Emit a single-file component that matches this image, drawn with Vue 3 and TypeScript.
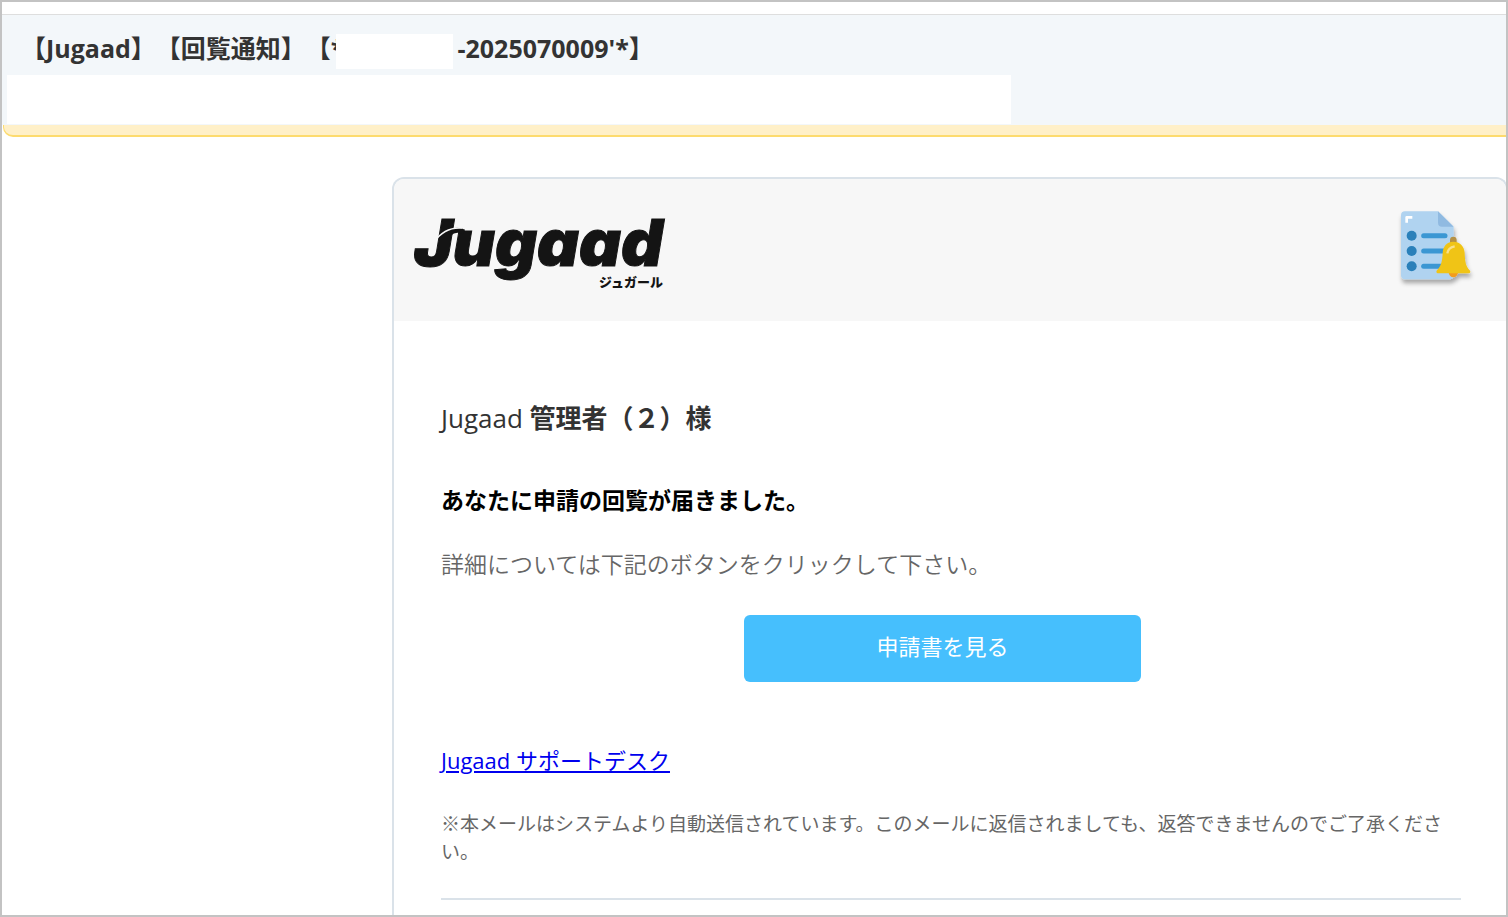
<script setup lang="ts">
const recipient: string = '管理者（２）様'
const bulletRows: number[] = [194, 240, 286]
</script>

<template>
  <div class="frame">
    <header class="subject">
      <h1 class="subject-title">
        <span>【Jugaad】【回覧通知】【*</span>
        <span class="mask"></span>
        <span>-2025070009'*】</span>
      </h1>
      <div class="sender-mask"></div>
    </header>
    <div class="notice-bar"></div>

    <main class="mail-card">
      <div class="brand-bar">
        <div class="brand">
          <span class="brand-name">Jugaad</span>
          <span class="brand-kana">ジュガール</span>
          <svg class="brand-swoosh" viewBox="0 0 80 40" aria-hidden="true">
            <path d="M35 23C39 19 44 18 50 21" fill="none" stroke="#141414" stroke-width="5" />
            <path d="M20 31C27 21 36 16 48 17" fill="none" stroke="#f7f7f7" stroke-width="1.5" />
          </svg>
        </div>
        <svg class="notice-icon" viewBox="30 117 240 240" aria-hidden="true">
          <defs>
            <filter id="icon-shadow" x="-20%" y="-20%" width="150%" height="150%">
              <feDropShadow dx="3" dy="12" stdDeviation="6" flood-color="#000" flood-opacity="0.32" />
            </filter>
          </defs>
          <g filter="url(#icon-shadow)">
            <path d="M54 121H153L200 167V313Q200 325 188 325H54Q42 325 42 313V133Q42 121 54 121Z" fill="#b0d3f0" />
            <path d="M153 121L200 167H165Q153 167 153 155Z" fill="#90bae1" />
            <path d="M59 155V139H76" fill="none" stroke="#fff" stroke-width="8" stroke-linejoin="round" />
            <template v-for="y in bulletRows" :key="y">
              <circle cx="74" :cy="y" r="15" fill="#2980ba" />
              <path :d="`M110 ${y}H174`" stroke="#3b97d3" stroke-width="15" stroke-linecap="round" />
            </template>
            <path d="M185 303A14 16 0 0 0 213 303V300H185Z" fill="#f29c1f" />
            <path d="M189 218V207A10 10 0 0 1 209 207V218Z" fill="#b59144" />
            <path d="M199 212C180 212 168 225 167 246C166 270 162 286 150 298C146 303 149 307 155 307H243C249 307 252 303 248 298C236 286 234 270 233 246C232 225 218 212 199 212Z" fill="#f0c419" />
            <path d="M181 247Q183 230 203 226" fill="none" stroke="#f9e18b" stroke-width="7" />
          </g>
        </svg>
      </div>

      <div class="mail-body">
        <h2 class="greeting"><span class="greeting-name">Jugaad</span> {{ recipient }}</h2>
        <p class="message">あなたに申請の回覧が届きました。</p>
        <p class="detail">詳細については下記のボタンをクリックして下さい。</p>
        <div class="action">
          <button type="button" class="view-button">申請書を見る</button>
        </div>
        <p class="support"><a href="#">Jugaad サポートデスク</a></p>
        <p class="footnote">※本メールはシステムより自動送信されています。このメールに返信されましても、返答できませんのでご了承ください。</p>
        <hr class="rule" />
      </div>
    </main>
  </div>
</template>

<style>
body {
  margin: 0;
  background: #fff;
}
</style>

<style scoped>
.frame {
  box-sizing: border-box;
  min-height: 100vh;
  display: flex;
  flex-direction: column;
  padding-top: 12px;
  border: 2px solid #c3c3c3;
  background: #fff;
  font-family: "Open Sans", "Noto Sans CJK JP", sans-serif;
  text-spacing-trim: space-all;
  overflow: hidden;
}
.subject {
  border-top: 1px solid #dedede;
  padding: 19px 0 1px 5px;
  background: #f3f7fa;
}
.subject-title {
  display: flex;
  align-items: flex-start;
  margin: 0;
  padding-left: 14px;
  height: 35px;
  font-size: 25px;
  line-height: 28px;
  font-weight: 700;
  color: #333;
  white-space: nowrap;
}
.mask {
  width: 117px;
  height: 35px;
  margin: 0 4px 0 -8px;
  background: #fff;
  position: relative;
}
.sender-mask {
  width: 67%;
  height: 49px;
  margin-top: 6px;
  background: #fff;
}
.notice-bar {
  height: 10px;
  margin-left: 1px;
  border: solid #fddb6e;
  border-width: 0 0 2px 1px;
  border-bottom-left-radius: 10px;
  background: #fff0c8;
}
.mail-card {
  flex: 1;
  margin: 40px -2px 0 390px;
  border: solid #dae2e9;
  border-width: 2px 2px 0;
  border-radius: 12px 12px 0 0;
  overflow: hidden;
}
.brand-bar {
  display: flex;
  align-items: center;
  justify-content: space-between;
  height: 142px;
  padding: 0 29px 0 20px;
  background: #f7f7f7;
}
.brand {
  position: relative;
  display: flex;
  flex-direction: column;
  align-items: flex-end;
  color: #141414;
}
.brand-name {
  font-family: Inter, sans-serif;
  font-size: 65px;
  line-height: 64px;
  font-weight: 900;
  font-style: italic;
  font-feature-settings: "cv11";
  -webkit-text-stroke: 1px #141414;
}
.brand-kana {
  font-family: "Noto Sans CJK JP", sans-serif;
  font-size: 13px;
  line-height: 14px;
  font-weight: 900;
}
.brand-swoosh {
  position: absolute;
  top: 0;
  left: 0;
  width: 80px;
  height: 40px;
}
.notice-icon {
  width: 80px;
  height: 80px;
}
.mail-body {
  padding: 77px 45px 14px 47px;
}
.greeting {
  margin: 0;
  font-size: 26px;
  line-height: 40px;
  font-weight: 700;
  color: #333;
}
.greeting-name {
  font-weight: 500;
}
.message {
  margin: 44px 0 0;
  font-size: 23px;
  line-height: 36px;
  font-weight: 700;
  color: #000;
}
.detail {
  margin: 28px 0 0;
  font-size: 23px;
  line-height: 36px;
  font-weight: 350;
  color: #666;
}
.action {
  display: flex;
  justify-content: center;
  margin-top: 33px;
  padding-right: 17px;
}
.view-button {
  width: 397px;
  height: 67px;
  padding: 0 0 5px;
  border: 0;
  border-radius: 6px;
  background: #46bffd;
  color: #fff;
  font-family: inherit;
  font-size: 22px;
  line-height: 32px;
}
.support {
  margin: 60px 0 0;
  font-size: 22px;
  line-height: 36px;
}
.support a {
  color: #00e;
}
.footnote {
  margin: 32px 0 0;
  font-size: 19px;
  line-height: 28px;
  color: #666;
}
.rule {
  height: 2px;
  margin: 32px 0 0;
  border: 0;
  background: #dae2e9;
}
</style>
